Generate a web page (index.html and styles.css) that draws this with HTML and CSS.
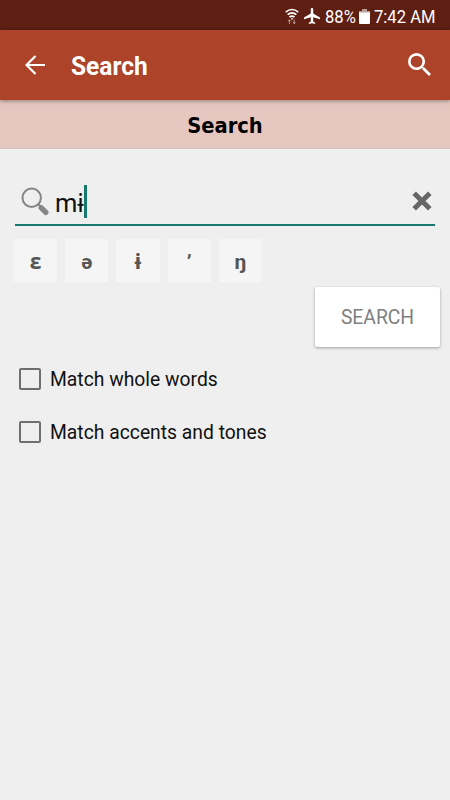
FILE: index.html
```html
<!DOCTYPE html>
<html lang="en">
<head>
<meta charset="utf-8">
<meta name="viewport" content="width=device-width, initial-scale=1">
<title>Search</title>
<link rel="stylesheet" href="styles.css">
</head>
<body>
<div class="status">
  <svg class="wifi" width="14" height="17" viewBox="0 0 14 17" fill="none" stroke="#fff" stroke-width="1.6"><path d="M.7 4.2Q7-1.2 13.3 4.2M2.6 6.7Q7 3 11.4 6.7M4.5 9.1Q7 7 9.5 9.1"/><circle cx="7" cy="10.8" r=".9" fill="#fff" stroke="none"/><path class="traffic" d="M4.4 12v4M3 13.5l1.4-1.7 1.4 1.7M9.2 11.5v4M7.8 14l1.4 1.7 1.4-1.7" stroke-width="1"/></svg>
  <svg class="plane" width="16" height="16" viewBox="2 2 20 20" fill="#fff"><path d="M22 16v-2l-8.500-5V3.500C13.500 2.670 12.830 2 12 2s-1.500.670-1.500 1.500V9L2 14v2l8.500-2.500V19L8 20.500V22l4-1 4 1v-1.500L13.500 19v-5.500z"/></svg>
  <span class="percent">88%</span>
  <svg class="battery" width="11" height="15" viewBox="0 0 11 15"><path d="M3 0h5v2h3v2H0V2h3z" fill="#b9a29d"/><path d="M0 3.500h11V14q0 1-1 1H1q-1 0-1-1z" fill="#fff"/></svg>
  <span class="time">7:42 AM</span>
</div>
<header class="toolbar">
  <svg class="back" width="20" height="20" viewBox="0 0 20 20" fill="none" stroke="#fff" stroke-width="2.200"><path d="M20 10H2M10.500 1L1.500 10l9 9"/></svg>
  <h1>Search</h1>
  <svg class="find" width="23" height="23" viewBox="3 3 17.500 17.500" fill="#fff"><path d="M15.500 14h-.790l-.280-.270A6.471 6.471 0 0 0 16 9.500 6.500 6.500 0 1 0 9.500 16c1.610 0 3.090-.590 4.230-1.570l.270.280v.790l5 4.990L20.490 19l-4.990-5zm-6 0a4.500 4.500 0 1 1 0-9 4.500 4.500 0 0 1 0 9z"/></svg>
</header>
<h2 class="subtitle"><span>Search</span></h2>
<main>
  <div class="field">
    <svg class="lens" width="29" height="29" viewBox="0 0 29 29" fill="none" stroke="#858585"><circle cx="10.700" cy="10.700" r="9.200" stroke-width="2"/><path d="M17.300 17.300l3 3" stroke-width="2.200"/><path d="M20.300 20.800l4.500 4.500" stroke-width="5.400" stroke-linecap="round"/></svg>
    <span class="query">mɨ</span><i class="caret"></i>
    <svg class="clear" width="20" height="20" viewBox="0 0 20 20" fill="none" stroke="#666" stroke-width="5"><path d="M2.200 2.200l15.600 15.600M17.800 2.200L2.200 17.800"/></svg>
  </div>
  <div class="keys"><button>ɛ</button><button>ə</button><button>ɨ</button><button class="mark">ʼ</button><button>ŋ</button></div>
  <button class="submit"><span>SEARCH</span></button>
  <div class="options">
    <div class="option"><i class="box"></i><span>Match whole words</span></div>
    <div class="option"><i class="box"></i><span>Match accents and tones</span></div>
  </div>
</main>
</body>
</html>
```

FILE: styles.css
```css
* { box-sizing: border-box; }
body { margin: 0; width: 450px; height: 800px; overflow: hidden; background: #efefef; color: #111; font-family: Roboto, "Noto Sans", sans-serif; }
h1, h2 { margin: 0; }
svg { display: block; flex: none; }
button { border: 0; padding: 0; font-family: inherit; }
.status { height: 30px; background: #5e1e12; color: #fff; display: flex; align-items: center; padding: 2px 0 0 285px; font-size: 19px; white-space: nowrap; }
.plane { margin-left: 5px; }
.percent, .time { display: block; transform: scaleX(.875); transform-origin: left; }
.percent { width: 30px; margin-left: 5px; }
.battery { margin-left: 4px; }
.time { margin-left: 4px; width: 62px; }
.traffic { opacity: .5; }
.toolbar { position: relative; height: 70px; background: #ad4329; color: #fff; display: flex; align-items: center; padding: 2px 19px 0 25px; box-shadow: 0 1px 4px rgba(0,0,0,.4); }
.back { margin-top: -2px; }
.toolbar h1 { margin: 2px 0 0 26px; font-size: 25px; line-height: 30px; font-weight: 700; transform: scaleX(.98); transform-origin: left; }
.find { margin-left: auto; margin-top: -3px; }
.subtitle { height: 49px; background: #e6c7c0; border-bottom: 1px solid #d0c4c1; text-align: center; font: 700 22px/51px "DejaVu Sans Condensed", "DejaVu Sans", sans-serif; font-stretch: condensed; color: #000; }
.subtitle span { display: block; transform: scaleX(.985); }
main { padding: 28px 15px 0; }
.field { height: 49px; border-bottom: 2px solid #16796d; display: flex; align-items: center; padding: 0 3px 0 6px; }
.lens { margin-top: 2px; }
.query { margin: 4px 0 0 5px; font-size: 25.500px; line-height: 30px; color: #111; }
.caret { width: 3px; height: 33px; margin-top: 1px; background: #16796d; }
.clear { margin-left: auto; }
.keys { display: flex; gap: 8px; margin: 13px 0 0 -1px; }
.keys button { width: 43.200px; height: 43px; background: #f5f5f5; color: #555; font-size: 21px; font-weight: 700; line-height: 43px; padding-top: 2px; }
.submit { display: block; width: 125px; height: 60px; margin: 5px -5px 0 auto; background: #fff; border-radius: 2px; box-shadow: 0 1px 3px rgba(0,0,0,.35); color: #808080; font-size: 20px; }
.submit span { display: block; transform: scaleX(.965); }
.options { padding: 6px 0 0 4px; }
.option { height: 52.500px; display: flex; align-items: center; gap: 9px; font-size: 20px; white-space: nowrap; }
.option span { transform: scaleX(.965); transform-origin: left; }
.box { width: 22px; height: 22px; border: 2px solid #6e6e6e; border-radius: 2px; }
```
